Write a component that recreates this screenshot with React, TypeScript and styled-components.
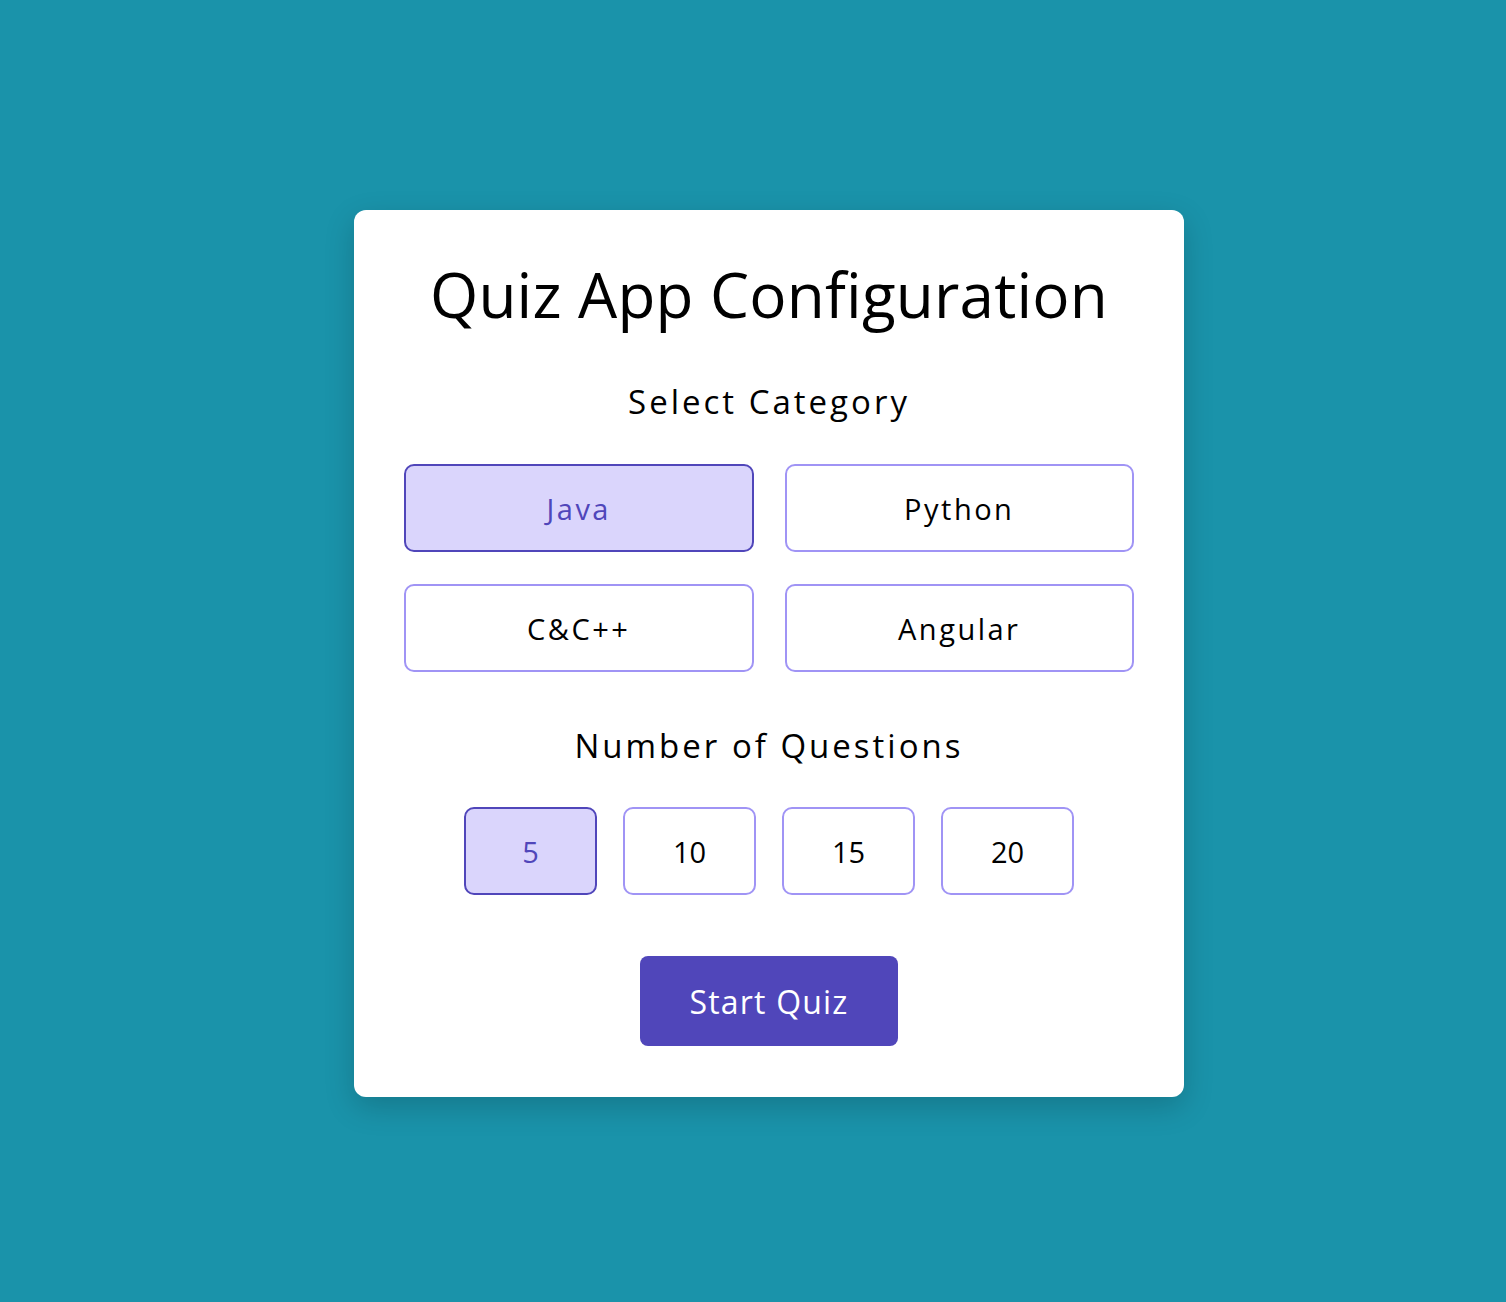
import * as React from 'react';
import styled, { createGlobalStyle } from 'styled-components';

const colors = {
  page: '#1a93aa',
  card: '#ffffff',
  accent: '#5046ba',
  accentSoft: '#dad5fc',
  outline: '#a094f5',
  font: '#000000'
};

const GlobalStyle = createGlobalStyle`
  html, body {
    margin: 0;
    padding: 0;
    background: ${colors.page};
  }
  body {
    font-family: "Open Sans", "Noto Sans", sans-serif;
  }
`;

const Page = styled.div`
  min-height: 1302px;
  display: flex;
  justify-content: center;
  padding: 210px 0 0 32px;
  box-sizing: border-box;
`;

const Card = styled.div`
  width: 830px;
  height: 887px;
  box-sizing: border-box;
  padding: 50px;
  background: ${colors.card};
  border-radius: 12px;
  box-shadow: 0 10px 30px rgba(0, 0, 0, 0.18);
  display: flex;
  flex-direction: column;
  align-items: center;
`;

const Title = styled.h1`
  margin: 0;
  font-size: 62px;
  line-height: 68px;
  font-weight: 500;
  letter-spacing: 0.2px;
  color: ${colors.font};
`;

const Heading = styled.h2<{ $top: number }>`
  margin: ${p => p.$top}px 0 0;
  font-size: 33px;
  line-height: 40px;
  font-weight: 400;
  letter-spacing: 3px;
  color: ${colors.font};
`;

const CategoryGrid = styled.div`
  margin-top: 42px;
  width: 100%;
  display: grid;
  grid-template-columns: 1fr 1fr;
  gap: 32px 31px;
`;

const CountRow = styled.div`
  margin-top: 41px;
  display: flex;
  gap: 26px;
`;

const Option = styled.button<{ $active?: boolean; $width?: number }>`
  height: 88px;
  width: ${p => (p.$width ? `${p.$width}px` : '100%')};
  box-sizing: border-box;
  border: 2px solid ${p => (p.$active ? colors.accent : colors.outline)};
  border-radius: 10px;
  background: ${p => (p.$active ? colors.accentSoft : colors.card)};
  color: ${p => (p.$active ? colors.accent : colors.font)};
  font-family: inherit;
  font-size: 29px;
  font-weight: 400;
  letter-spacing: ${p => (p.$width ? '0' : '2.5px')};
  cursor: pointer;
`;

const StartButton = styled.button`
  margin-top: 61px;
  width: 258px;
  height: 90px;
  border: none;
  border-radius: 8px;
  background: ${colors.accent};
  color: #ffffff;
  font-family: inherit;
  font-size: 32px;
  font-weight: 400;
  letter-spacing: 1.2px;
  cursor: pointer;
`;

const categories = ['Java', 'Python', 'C&C++', 'Angular'];
const counts = [5, 10, 15, 20];

const App = () => {
  const [category, setCategory] = React.useState('Java');
  const [count, setCount] = React.useState(5);

  return (
    <Page>
      <GlobalStyle />
      <Card>
        <Title>Quiz App Configuration</Title>
        <Heading $top={54}>Select Category</Heading>
        <CategoryGrid>
          {categories.map(c => (
            <Option key={c} $active={c === category} onClick={() => setCategory(c)}>
              {c}
            </Option>
          ))}
        </CategoryGrid>
        <Heading $top={54}>Number of Questions</Heading>
        <CountRow>
          {counts.map(n => (
            <Option key={n} $width={133} $active={n === count} onClick={() => setCount(n)}>
              {n}
            </Option>
          ))}
        </CountRow>
        <StartButton>Start Quiz</StartButton>
      </Card>
    </Page>
  );
};

export default App;
